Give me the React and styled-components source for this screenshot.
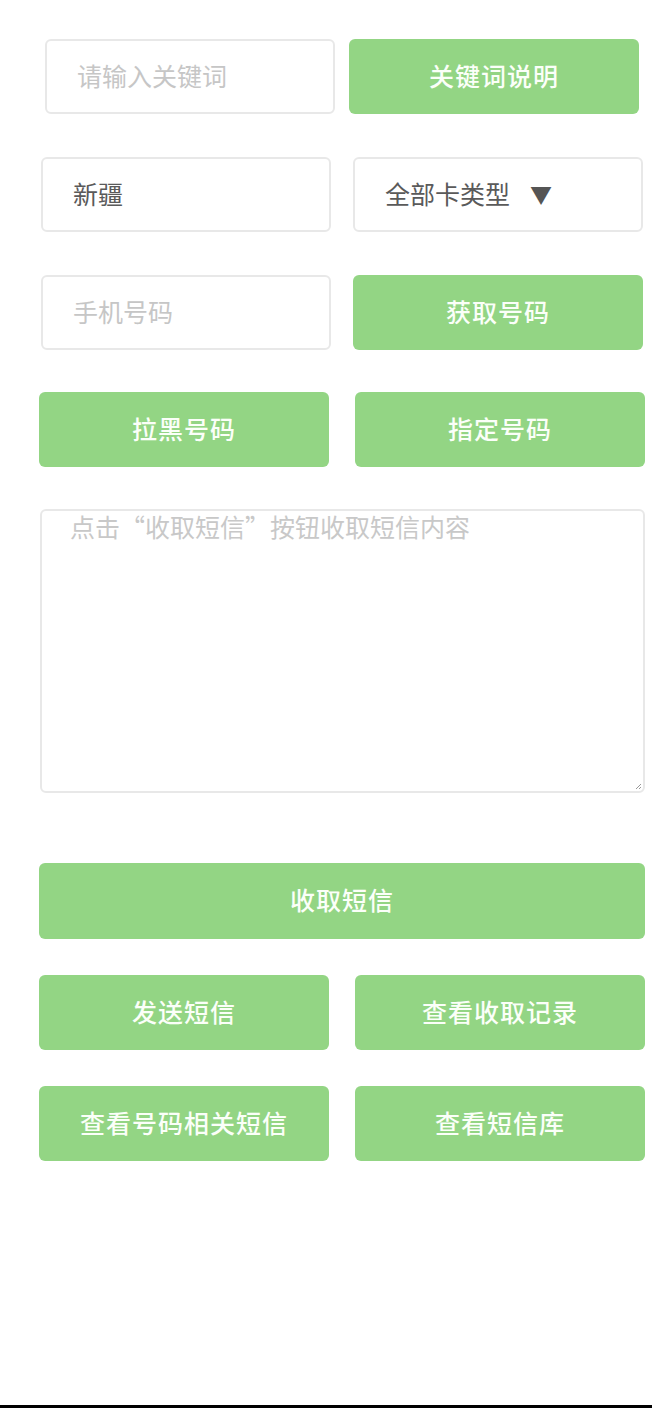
import { createGlobalStyle } from "styled-components";
import styled from "styled-components";

const GlobalStyle = createGlobalStyle`
  * {
    box-sizing: border-box;
  }
  body {
    margin: 0;
    background: #fff;
    font-family: "Noto Sans CJK SC", "Noto Sans", sans-serif;
  }
`;

const Page = styled.div`
  height: 1408px;
  padding-top: 39px;
  border-bottom: 3px solid #000;
  display: flex;
  flex-direction: column;
`;

const Row = styled.div`
  display: grid;
  grid-template-columns: 290px 290px;
  column-gap: ${(p) => p.gap}px;
  padding-left: ${(p) => p.left}px;
  margin-bottom: ${(p) => p.space}px;
`;

const Field = styled.div`
  height: 75px;
  border: 2px solid #e8e8e8;
  border-radius: 6px;
  padding: 0 0 4px 30px;
  display: flex;
  align-items: center;
  font-size: 25px;
  color: ${(p) => (p.placeholder ? "#c6c6c6" : "#5a5a5a")};
  background: #fff;
`;

const Caret = styled.span`
  margin-left: 20px;
  font-size: 22px;
  color: #555;
`;

const Button = styled.button`
  height: ${(p) => p.h || 75}px;
  width: 100%;
  border: none;
  border-radius: 6px;
  background: #93d584;
  color: #fbfff9;
  font-family: inherit;
  font-size: 25px;
  font-weight: 500;
  letter-spacing: 1px;
  padding: 0 0 4px;
`;

const MessageBox = styled.div`
  margin-left: 40px;
  width: 605px;
  height: 284px;
  border: 2px solid #e8e8e8;
  border-radius: 6px;
  padding: 0 0 0 28px;
  font-size: 25px;
  line-height: 30px;
  color: #c8c8c8;
  margin-bottom: 70px;
  position: relative;
`;

const Grip = styled.svg`
  position: absolute;
  right: 1px;
  bottom: 1px;
`;

const Wide = styled.div`
  padding-left: 39px;
  width: 645px;
  margin-bottom: 36px;
`;

export default function App() {
  return (
    <>
      <GlobalStyle />
      <Page>
        <Row left={45} gap={14} space={43}>
          <Field placeholder>请输入关键词</Field>
          <Button>关键词说明</Button>
        </Row>
        <Row left={41} gap={22} space={43}>
          <Field>新疆</Field>
          <Field>
            全部卡类型<Caret>▼</Caret>
          </Field>
        </Row>
        <Row left={41} gap={22} space={42}>
          <Field placeholder>手机号码</Field>
          <Button>获取号码</Button>
        </Row>
        <Row left={39} gap={26} space={42}>
          <Button>拉黑号码</Button>
          <Button>指定号码</Button>
        </Row>
        <MessageBox>
          点击“收取短信”按钮收取短信内容
          <Grip width="8" height="8" viewBox="0 0 8 8">
            <path d="M7 2 L2 7 M7 5 L5 7" stroke="#999" strokeWidth="1" />
          </Grip>
        </MessageBox>
        <Wide>
          <Button h={76}>收取短信</Button>
        </Wide>
        <Row left={39} gap={26} space={36}>
          <Button>发送短信</Button>
          <Button>查看收取记录</Button>
        </Row>
        <Row left={39} gap={26} space={0}>
          <Button>查看号码相关短信</Button>
          <Button>查看短信库</Button>
        </Row>
      </Page>
    </>
  );
}
